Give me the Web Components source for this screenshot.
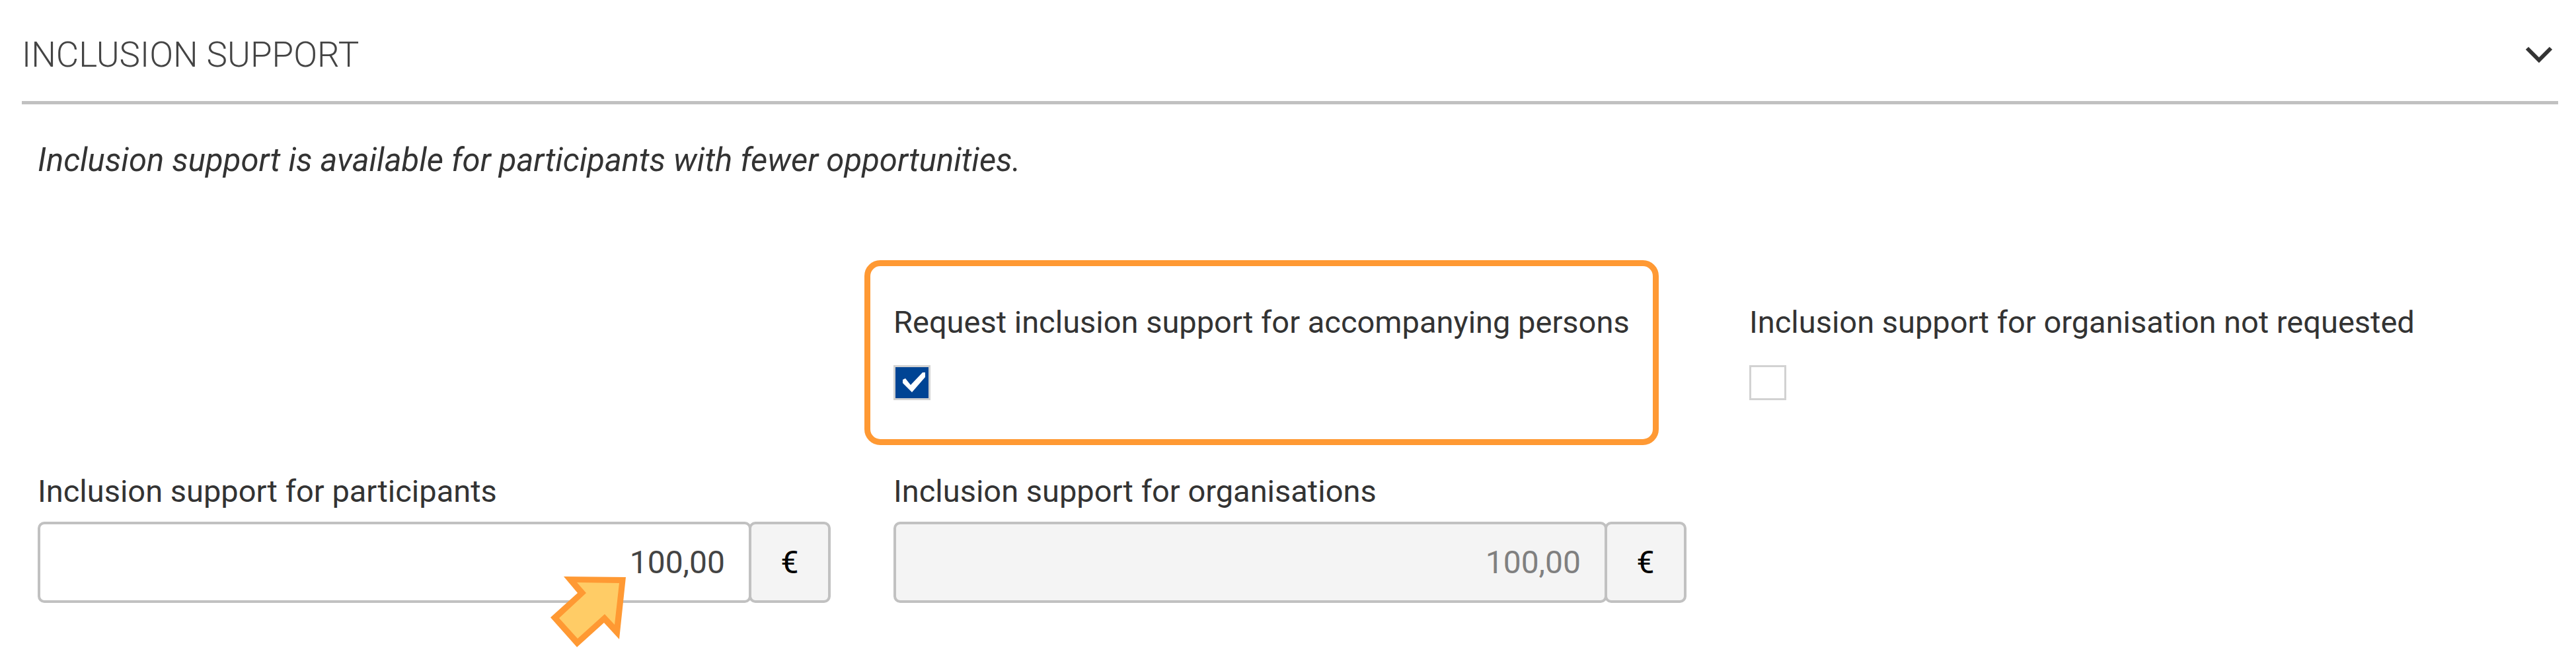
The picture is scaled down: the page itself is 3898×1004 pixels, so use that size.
<!DOCTYPE html>
<html lang="en">
<head>
<meta charset="utf-8">
<title>Inclusion support</title>
<style>
  body {
    margin: 0;
    min-height: 100vh;
    background: #fff;
    color: #333;
    font: 400 47px/56px Roboto, "Liberation Sans", sans-serif;
  }
</style>
</head>
<body>
<support-panel heading="INCLUSION SUPPORT">
  <span slot="intro">Inclusion support is available for participants with fewer opportunities.</span>
  <support-grid>
    <check-field class="second" label="Request inclusion support for accompanying persons" checked highlighted></check-field>
    <check-field label="Inclusion support for organisation not requested"></check-field>
    <amount-field label="Inclusion support for participants" value="100,00"><pointer-arrow></pointer-arrow></amount-field>
    <amount-field label="Inclusion support for organisations" value="100,00" disabled></amount-field>
  </support-grid>
</support-panel>

<script>
class BaseElement extends HTMLElement {
  connectedCallback() {
    if (!this.shadowRoot) {
      this.attachShadow({ mode: "open" }).innerHTML = this.render();
    }
  }
  attr(name) { return this.getAttribute(name) || ""; }
}

customElements.define("support-panel", class extends BaseElement {
  render() {
    return `
      <style>
        :host { display: block; padding: 0 27px 0 33px; }
        header {
          display: flex; align-items: center; justify-content: space-between;
          padding: 53px 8px 40px 0; border-bottom: 5px solid #c1c1c1;
        }
        h2 { margin: 0; color: #444; font-size: 53px; line-height: 60px; font-weight: 300; }
        button {
          display: flex; padding: 0; border: 0; background: none; color: #333;
        }
        svg { display: block; width: 42px; height: 26px; }
        .body { padding: 57px 24px 80px; }
        p { margin: 0 0 189px; font-size: 49px; font-style: italic; }
      </style>
      <header>
        <h2>${this.attr("heading")}</h2>
        <button type="button" aria-label="Collapse section" aria-expanded="true">
          <svg viewBox="0 0 42 26" fill="none" stroke="currentColor" stroke-width="6" aria-hidden="true"><path d="M3 3 21 21 39 3"/></svg>
        </button>
      </header>
      <div class="body">
        <p><slot name="intro"></slot></p>
        <slot></slot>
      </div>`;
  }
});

customElements.define("support-grid", class extends BaseElement {
  render() {
    return `
      <style>
        :host {
          display: grid; grid-template-columns: repeat(3, minmax(0, 1fr));
          column-gap: 95px; row-gap: 110px;
        }
        ::slotted(.second) { grid-column: 2; }
      </style>
      <slot></slot>`;
  }
});

customElements.define("check-field", class extends BaseElement {
  render() {
    return `
      <style>
        :host { display: block; position: relative; }
        label { display: block; margin-bottom: 37px; white-space: nowrap; }
        .box { display: grid; width: 56px; height: 53px; }
        input, svg { grid-area: 1 / 1; }
        input {
          appearance: none; box-sizing: border-box; width: 56px; height: 53px;
          margin: 0; border: 3px solid #d2d2d2; background: #fff;
        }
        input:checked { background: #004494; }
        svg { width: 56px; height: 53px; fill: #fff; pointer-events: none; visibility: hidden; }
        input:checked + svg { visibility: visible; }
        :host([highlighted])::before {
          content: ""; position: absolute; inset: -66px 42px -68px -44px;
          border: 9px solid #ff9933; border-radius: 24px; pointer-events: none;
        }
      </style>
      <label for="check">${this.attr("label")}</label>
      <div class="box">
        <input id="check" type="checkbox" ${this.hasAttribute("checked") ? "checked" : ""}>
        <svg viewBox="0 0 56 53" aria-hidden="true"><path d="M14 22 18 20 26 30 44 11 48 11 48 18 28 41 14 27z"/></svg>
      </div>`;
  }
});

customElements.define("amount-field", class extends BaseElement {
  render() {
    return `
      <style>
        :host { display: block; }
        label { display: block; margin-bottom: 18px; white-space: nowrap; }
        .group { display: flex; position: relative; height: 123px; font-size: 48px; }
        input, .unit {
          box-sizing: border-box; border: 4px solid #c1c1c1; border-radius: 10px;
        }
        input {
          flex: 1; min-width: 0; margin: 0 -4px 0 0; padding: 0 36px;
          background: #fff; color: #444; font: inherit; text-align: right;
        }
        input:disabled { background: #f4f4f4; color: #808080; }
        .unit {
          display: flex; align-items: center; justify-content: center;
          width: 124px; background: #f4f4f4; color: #000;
        }
        ::slotted(*) { position: absolute; right: 310px; top: 83px; }
      </style>
      <label for="amount">${this.attr("label")}</label>
      <div class="group">
        <input id="amount" type="text" inputmode="decimal" value="${this.attr("value")}" ${this.hasAttribute("disabled") ? "disabled" : ""}>
        <span class="unit">€</span>
        <slot></slot>
      </div>`;
  }
});

customElements.define("pointer-arrow", class extends BaseElement {
  render() {
    return `
      <style>
        :host { display: block; width: 114px; height: 107px; pointer-events: none; }
        svg { display: block; width: 100%; height: 100%; }
      </style>
      <svg viewBox="0 0 114 107" aria-hidden="true">
        <path fill="#ff9933" d="M20 0 114 1 104 95 81 70 40 107 0 62 41 25z"/>
        <path fill="#ffcc66" d="M40 9 104 10 97 73 82 57 41 94 13 63 54 25z"/>
      </svg>`;
  }
});
</script>
</body>
</html>
